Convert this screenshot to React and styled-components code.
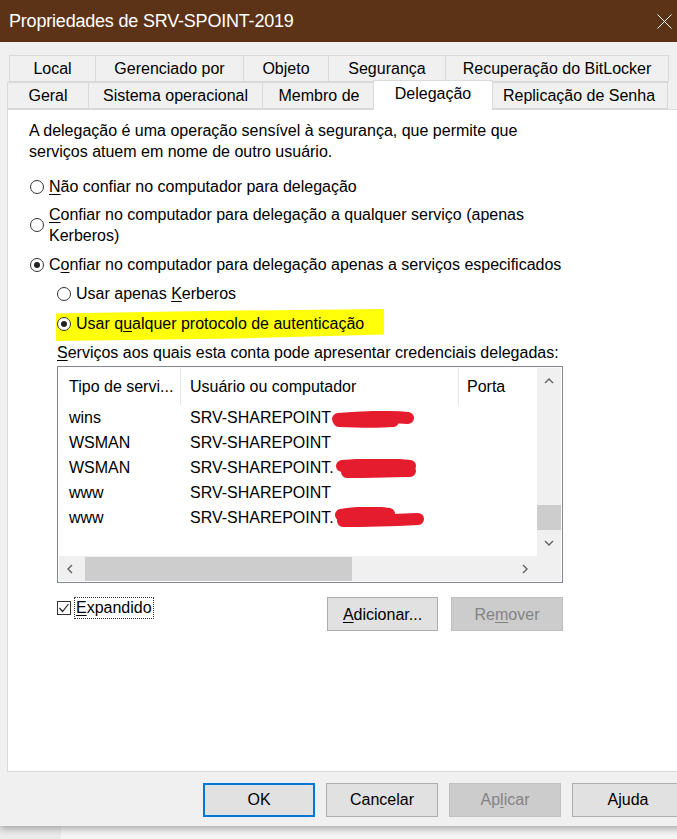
import styled, { createGlobalStyle } from 'styled-components'

const GlobalStyle = createGlobalStyle`
  html, body { margin: 0; padding: 0; }
  body {
    height: 839px;
    overflow: hidden;
    background: linear-gradient(to right, #ebebeb 61px, #f5f5f5 61px);
    font-family: "Liberation Sans", Arial, sans-serif;
    color: #000;
  }
`

const Window = styled.div`
  width: 700px;
  height: 826px;
  background: #f0f0f0;
  box-shadow: 0 3px 7px rgba(0, 0, 0, 0.3);
  display: flex;
  flex-direction: column;
`

const TitleBar = styled.div`
  height: 42px;
  flex: none;
  background: #5d3318;
  color: #fff;
  display: flex;
  align-items: center;
  justify-content: space-between;
  padding: 0 28px 0 9px;
  font-size: 18px;
  letter-spacing: -0.2px;
`

const Tabs = styled.div`
  margin-top: 13px;
  display: flex;
  flex-direction: column;
`

const TabRow = styled.div`
  display: flex;
  align-items: flex-end;
  height: 27px;
  padding-left: ${p => p.$offset}px;
`

const Tab = styled.div`
  box-sizing: border-box;
  width: ${p => p.$w}px;
  height: ${p => (p.$active ? 30 : 27)}px;
  margin-left: ${p => p.$ml ?? -1}px;
  margin-bottom: ${p => (p.$active ? -1 : 0)}px;
  position: relative;
  z-index: ${p => (p.$active ? 2 : 0)};
  background: ${p => (p.$active ? '#fff' : '#f0f0f0')};
  border: 1px solid #d9d9d9;
  border-bottom: ${p => (p.$active ? 'none' : '1px solid #d9d9d9')};
  display: flex;
  align-items: center;
  justify-content: center;
  padding-bottom: ${p => (p.$active ? 3 : 0)}px;
  font-size: 16px;
  white-space: nowrap;
`

const Panel = styled.div`
  margin-left: 7px;
  height: 663px;
  box-sizing: border-box;
  background: #fff;
  border: 1px solid #d9d9d9;
  padding: 10px 0 0 21px;
  display: flex;
  flex-direction: column;
  font-size: 16px;
  line-height: 21px;
`

const Intro = styled.p`
  margin: 0;
`

const Option = styled.label`
  display: flex;
  align-items: center;
  gap: 5px;
  margin-top: ${p => p.$mt}px;
  margin-left: ${p => (p.$sub ? 28 : 1)}px;
`

const Highlight = styled.div`
  align-self: flex-start;
  width: 328px;
  box-sizing: border-box;
  margin-top: 5px;
  margin-left: 27px;
  padding: 4px 0 7px 1px;
  background: #ffff0a;
  clip-path: polygon(0 14%, 45% 6%, 100% 0, 100% 80%, 55% 92%, 0 100%);
`

const Circle = styled.span`
  box-sizing: border-box;
  width: 14px;
  height: 14px;
  flex: none;
  border-radius: 50%;
  border: 1px solid #333;
  background: #fff;
  display: flex;
  align-items: center;
  justify-content: center;
  &::after {
    content: '';
    width: 6px;
    height: 6px;
    border-radius: 50%;
    background: ${p => (p.$on ? '#222' : 'transparent')};
  }
`

const Key = styled.span`
  text-decoration: underline;
  text-underline-offset: 2px;
`

const Caption = styled.div`
  margin: 1px 0 0 28px;
`

const ListBox = styled.div`
  margin: 3px 0 0 28px;
  width: 506px;
  box-sizing: border-box;
  border: 1px solid #828790;
  padding: 1px;
  display: grid;
  grid-template-columns: 478px 24px;
  grid-template-rows: 188px 25px;
  background: #fff;
`

const ListArea = styled.div`
  overflow: hidden;
`

const HeaderRow = styled.div`
  display: flex;
  height: 37px;
  align-items: stretch;
`

const HeadCell = styled.div`
  width: ${p => p.$w}px;
  flex: none;
  box-sizing: border-box;
  padding-left: ${p => p.$pl}px;
  display: flex;
  align-items: center;
  border-right: ${p => (p.$sep ? '1px solid #e5e5e5' : 'none')};
  white-space: nowrap;
`

const Row = styled.div`
  display: flex;
  height: 25px;
  align-items: center;
`

const Cell = styled.div`
  position: relative;
  width: ${p => p.$w}px;
  flex: none;
  box-sizing: border-box;
  padding-left: ${p => p.$pl}px;
  white-space: nowrap;
`

const Scribble = styled.svg`
  position: absolute;
  left: ${p => p.$x}px;
  top: ${p => p.$y}px;
`

const VScroll = styled.div`
  background: #f0f0f0;
  display: flex;
  flex-direction: column;
  align-items: center;
`

const ArrowBox = styled.div`
  width: 24px;
  height: ${p => p.$h || 24}px;
  flex: none;
  display: flex;
  align-items: center;
  justify-content: center;
`

const VTrack = styled.div`
  flex: 1;
  width: 24px;
`

const VThumb = styled.div`
  margin-top: ${p => p.$top}px;
  width: 24px;
  height: 25px;
  background: #cdcdcd;
`

const HScroll = styled.div`
  background: #f0f0f0;
  display: flex;
  align-items: center;
`

const HTrack = styled.div`
  flex: 1;
  height: 25px;
  display: flex;
  align-items: center;
`

const HThumb = styled.div`
  margin-left: 2px;
  width: 267px;
  height: 24px;
  background: #cdcdcd;
`

const Corner = styled.div`
  background: #f0f0f0;
`

const ActionRow = styled.div`
  margin: 14px 0 0 28px;
  width: 506px;
  display: flex;
  align-items: center;
`

const Check = styled.span`
  box-sizing: border-box;
  width: 14px;
  height: 14px;
  border: 1px solid #333;
  display: flex;
  align-items: center;
  justify-content: center;
  margin-top: -12px;
`

const FocusText = styled.span`
  margin: -12px 0 0 4px;
  padding: 0 1px;
  outline: 1px dotted #333;
  line-height: 20px;
`

const Spacer = styled.div`
  flex: 1;
`

const Button = styled.div`
  box-sizing: border-box;
  width: ${p => p.$w || 112}px;
  height: 34px;
  flex: none;
  display: flex;
  align-items: center;
  justify-content: center;
  font-size: 16px;
  background: ${p => (p.$disabled ? '#cccccc' : '#e1e1e1')};
  color: ${p => (p.$disabled ? '#838383' : '#000')};
  border: ${p => (p.$default ? '2px solid #0078d7' : p.$disabled ? '1px solid #bfbfbf' : '1px solid #adadad')};
`

const Footer = styled.div`
  margin-top: 11px;
  padding-left: 203px;
  display: flex;
  gap: 11px;
`

const Chevron = ({ dir }) => {
  const d = {
    up: 'M1 6 L5 2 L9 6',
    down: 'M1 2 L5 6 L9 2',
    left: 'M6 1 L2 5 L6 9',
    right: 'M3 1 L7 5 L3 9'
  }[dir]
  return (
    <svg width="10" height="10" viewBox="0 0 10 10">
      <path d={d} fill="none" stroke="#606060" strokeWidth="1.4" />
    </svg>
  )
}

const Blob = ({ x, y, w, h, d }) => (
  <Scribble $x={x} $y={y} width={w} height={h} viewBox={`0 0 ${w} ${h}`}>
    {d.map((p, i) => (
      <path key={i} d={p} fill="none" stroke="#e51c2d" strokeWidth="12" strokeLinecap="round" />
    ))}
  </Scribble>
)

const rows = [
  { t: 'wins', u: 'SRV-SHAREPOINT', blob: { x: 150, y: 4, w: 84, h: 17, d: ['M7 8 C 30 6, 55 5, 77 7', 'M8 10 C 30 11, 50 11, 62 10'] } },
  { t: 'WSMAN', u: 'SRV-SHAREPOINT' },
  { t: 'WSMAN', u: 'SRV-SHAREPOINT.', blob: { x: 154, y: 2, w: 82, h: 20, d: ['M7 7 C 30 5, 60 5, 75 7', 'M12 13 C 35 13, 60 12, 75 12'] } },
  { t: 'www', u: 'SRV-SHAREPOINT' },
  { t: 'www', u: 'SRV-SHAREPOINT.', blob: { x: 152, y: 0, w: 92, h: 22, d: ['M8 8 C 25 5, 45 5, 56 7', 'M10 14 C 40 14, 65 13, 85 12'] } }
]

export default function App() {
  return (
    <>
      <GlobalStyle />
      <Window>
        <TitleBar>
          <span>Propriedades de SRV-SPOINT-2019</span>
          <svg width="15" height="15" viewBox="0 0 15 15">
            <path d="M0.5 0.5 L14.5 14.5 M14.5 0.5 L0.5 14.5" stroke="#fff" strokeWidth="1" />
          </svg>
        </TitleBar>

        <Tabs>
          <TabRow $offset={9}>
            <Tab $w={87} $ml={0}>Local</Tab>
            <Tab $w={149}>Gerenciado por</Tab>
            <Tab $w={86}>Objeto</Tab>
            <Tab $w={118}>Segurança</Tab>
            <Tab $w={224}>Recuperação do BitLocker</Tab>
          </TabRow>
          <TabRow $offset={7}>
            <Tab $w={82} $ml={0}>Geral</Tab>
            <Tab $w={175}>Sistema operacional</Tab>
            <Tab $w={114}>Membro de</Tab>
            <Tab $w={120} $ml={-3} $active>Delegação</Tab>
            <Tab $w={178} $ml={-3}>Replicação de Senha</Tab>
          </TabRow>
        </Tabs>

        <Panel>
          <Intro>
            A delegação é uma operação sensível à segurança, que permite que
            <br />
            serviços atuem em nome de outro usuário.
          </Intro>

          <Option $mt={14}>
            <Circle />
            <span><Key>N</Key>ão confiar no computador para delegação</span>
          </Option>
          <Option $mt={7}>
            <Circle />
            <span>
              <Key>C</Key>onfiar no computador para delegação a qualquer serviço (apenas
              <br />
              Kerberos)
            </span>
          </Option>
          <Option $mt={8}>
            <Circle $on />
            <span>C<Key>o</Key>nfiar no computador para delegação apenas a serviços especificados</span>
          </Option>
          <Option $mt={8} $sub>
            <Circle />
            <span>Usar apenas <Key>K</Key>erberos</span>
          </Option>
          <Highlight>
            <Option $mt={0} style={{ marginLeft: 0 }}>
              <Circle $on />
              <span>Usar q<Key>u</Key>alquer protocolo de autenticação</span>
            </Option>
          </Highlight>

          <Caption><Key>S</Key>erviços aos quais esta conta pode apresentar credenciais delegadas:</Caption>

          <ListBox>
            <ListArea>
              <HeaderRow>
                <HeadCell $w={122} $pl={10} $sep>Tipo de servi...</HeadCell>
                <HeadCell $w={278} $pl={9} $sep>Usuário ou computador</HeadCell>
                <HeadCell $w={78} $pl={8}>Porta</HeadCell>
              </HeaderRow>
              {rows.map((r, i) => (
                <Row key={i}>
                  <Cell $w={122} $pl={10}>{r.t}</Cell>
                  <Cell $w={278} $pl={9}>
                    {r.u}
                    {r.blob && <Blob {...r.blob} />}
                  </Cell>
                </Row>
              ))}
            </ListArea>
            <VScroll>
              <ArrowBox $h={28}><Chevron dir="up" /></ArrowBox>
              <VTrack>
                <VThumb $top={109} />
              </VTrack>
              <ArrowBox $h={28}><Chevron dir="down" /></ArrowBox>
            </VScroll>
            <HScroll>
              <ArrowBox><Chevron dir="left" /></ArrowBox>
              <HTrack>
                <HThumb />
              </HTrack>
              <ArrowBox><Chevron dir="right" /></ArrowBox>
            </HScroll>
            <Corner />
          </ListBox>

          <ActionRow>
            <Check>
              <svg width="12" height="12" viewBox="0 0 12 12">
                <path d="M1.5 6 L4.5 9.5 L10.5 2" fill="none" stroke="#222" strokeWidth="1.2" />
              </svg>
            </Check>
            <FocusText><Key>E</Key>xpandido</FocusText>
            <Spacer />
            <Button $w={111}><Key>A</Key>dicionar...</Button>
            <Button $w={112} $disabled style={{ marginLeft: 13 }}>Re<Key>m</Key>over</Button>
          </ActionRow>
        </Panel>

        <Footer>
          <Button $default>OK</Button>
          <Button>Cancelar</Button>
          <Button $disabled>Ap<Key>l</Key>icar</Button>
          <Button>Ajuda</Button>
        </Footer>
      </Window>
    </>
  )
}
